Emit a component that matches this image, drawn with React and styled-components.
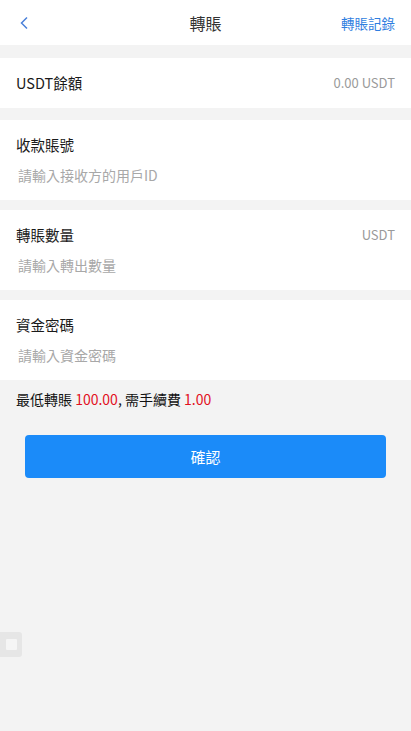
import styled, { createGlobalStyle } from "styled-components"

const GlobalStyle = createGlobalStyle`
  html, body {
    margin: 0;
    padding: 0;
    background: #f3f3f3;
  }
  body {
    font-family: "Noto Sans CJK TC", "Noto Sans", "Liberation Sans", sans-serif;
    color: #222;
  }
  input::placeholder {
    color: #a8a8a8;
  }
`

const fields = [
  { label: "收款賬號", placeholder: "請輸入接收方的用戶ID" },
  { label: "轉賬數量", placeholder: "請輸入轉出數量", unit: "USDT" },
  { label: "資金密碼", placeholder: "請輸入資金密碼", type: "password" },
]

const App = () => {
  return (
    <Page>
      <GlobalStyle />
      <Header>
        <Back>
          <svg width="10" height="14" viewBox="0 0 10 14">
            <path d="M8 1.5 L2.5 7 L8 12.5" fill="none" stroke="#4a80d9" strokeWidth="1.5" />
          </svg>
        </Back>
        <Title>轉賬</Title>
        <HeaderLink>轉賬記錄</HeaderLink>
      </Header>

      <Row>
        <Label>USDT餘額</Label>
        <Muted>0.00 USDT</Muted>
      </Row>

      <Fields>
        {fields.map((f, i) => (
          <Field key={i}>
            <FieldHead>
              <Label>{f.label}</Label>
              {f.unit && <Muted>{f.unit}</Muted>}
            </FieldHead>
            <Input placeholder={f.placeholder} type={f.type || "text"} />
          </Field>
        ))}
      </Fields>

      <Note>
        最低轉賬 <Red>100.00</Red>, 需手續費 <Red>1.00</Red>
      </Note>

      <Button>確認</Button>

      <Floater>
        <span />
      </Floater>
    </Page>
  )
}

const Page = styled.div`
  min-height: 731px;
  background: #f3f3f3;
  position: relative;
`

const Header = styled.div`
  height: 45px;
  background: #fff;
  display: flex;
  align-items: center;
  justify-content: space-between;
  padding: 0 16px 0 19px;
  margin-bottom: 13px;
  position: relative;
`

const Back = styled.div`
  width: 60px;
  display: flex;
  align-items: center;
  padding-top: 1px;
`

const Title = styled.div`
  position: absolute;
  left: 50%;
  transform: translateX(-50%);
  font-size: 16px;
  color: #333;
`

const HeaderLink = styled.div`
  font-size: 13.5px;
  color: #2f7ee0;
`

const Row = styled.div`
  height: 50px;
  background: #fff;
  display: flex;
  align-items: center;
  justify-content: space-between;
  padding: 0 16px;
  margin-bottom: 12px;
`

const Label = styled.div`
  font-size: 14.5px;
  color: #1a1a1a;
  line-height: 22px;
`

const Muted = styled.div`
  font-size: 13px;
  color: #9a9a9a;
  line-height: 22px;
`

const Fields = styled.div`
  display: flex;
  flex-direction: column;
  gap: 10px;
`

const Field = styled.div`
  background: #fff;
  padding: 14px 16px 10px;
`

const FieldHead = styled.div`
  display: flex;
  justify-content: space-between;
  align-items: center;
`

const Input = styled.input`
  display: block;
  width: 100%;
  height: 30px;
  margin-top: 4px;
  padding: 0 2px;
  border: none;
  outline: none;
  background: transparent;
  font-family: inherit;
  font-size: 14px;
  color: #333;
  box-sizing: border-box;
`

const Note = styled.div`
  padding: 8px 16px 0;
  font-size: 14px;
  line-height: 22px;
  color: #111;
`

const Red = styled.span`
  color: #e2101e;
`

const Button = styled.button`
  display: block;
  width: calc(100% - 50px);
  height: 43px;
  margin: 25px 25px 0;
  border: none;
  border-radius: 4px;
  background: #1b8bf9;
  color: #fff;
  font-family: inherit;
  font-size: 15px;
`

const Floater = styled.div`
  position: absolute;
  left: 0;
  top: 632px;
  width: 22px;
  height: 25px;
  background: #e6e6e6;
  border-radius: 0 3px 3px 0;
  display: flex;
  align-items: center;
  justify-content: center;

  span {
    width: 11px;
    height: 11px;
    background: #f5f5f5;
    border-radius: 1px;
  }
`

export default App
